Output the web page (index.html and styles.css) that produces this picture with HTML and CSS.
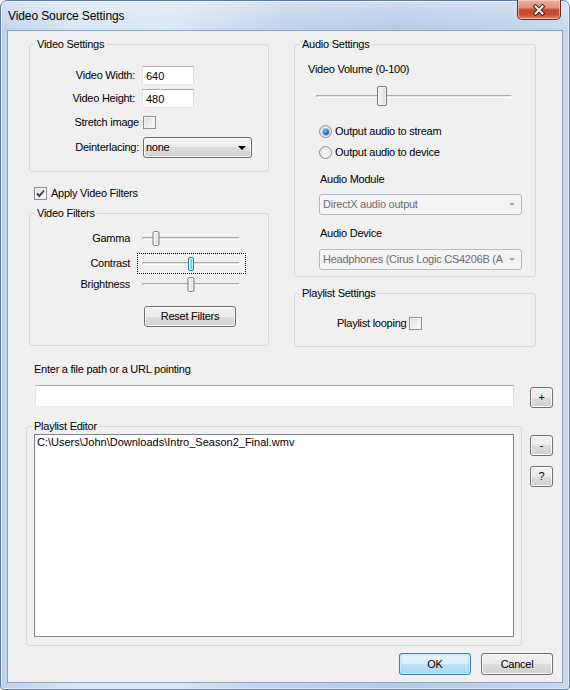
FILE: index.html
```html
<!DOCTYPE html>
<html lang="en">
<head>
<meta charset="utf-8">
<title>Video Source Settings</title>
<link rel="stylesheet" href="styles.css">
</head>
<body>
<div class="window">
  <div class="titlebar">
    <span class="title">Video Source Settings</span>
    <button class="close" type="button" aria-label="Close">
      <svg width="14" height="12" viewBox="0 0 14 12" aria-hidden="true">
        <path d="M3.5 2.5 L10.5 9.5 M10.5 2.5 L3.5 9.5" stroke="#4a1d16" stroke-width="4" stroke-linecap="square" fill="none"/>
        <path d="M3.5 2.5 L10.5 9.5 M10.5 2.5 L3.5 9.5" stroke="#ffffff" stroke-width="2" stroke-linecap="square" fill="none"/>
      </svg>
    </button>
  </div>
  <div class="client">
    <div class="top">
      <div class="col col-left">
        <fieldset class="group">
          <legend>Video Settings</legend>
          <div class="vs-body">
            <div class="frow r-width"><span class="flabel narrow">Video Width:</span><input class="textbox small" value="640"></div>
            <div class="frow r-height"><span class="flabel narrow">Video Height:</span><input class="textbox small" value="480"></div>
            <div class="frow r-stretch"><span class="flabel">Stretch image</span><span class="check"></span></div>
            <div class="frow r-deint"><span class="flabel">Deinterlacing:</span><span class="combo deint"><span class="combo-text">none</span><span class="arrow"></span></span></div>
          </div>
        </fieldset>
        <div class="apply">
          <span class="check checked">
            <svg width="11" height="11" viewBox="0 0 11 11" aria-hidden="true"><path d="M2 5.5 L4.3 8 L9 2.5" stroke="#2c3f73" stroke-width="1.9" fill="none"/></svg>
          </span>
          <span class="apply-text">Apply Video Filters</span>
        </div>
        <fieldset class="group filters">
          <legend>Video Filters</legend>
          <div class="vf-body">
            <div class="srow r-gamma">
              <span class="slabel">Gamma</span>
              <span class="slider small"><span class="track"><span class="thumb" style="left: 13.3%"></span></span></span>
            </div>
            <div class="srow r-contrast">
              <span class="slabel">Contrast</span>
              <span class="slider small focused"><span class="track"><span class="thumb hot" style="left: 50.5%"></span></span></span>
            </div>
            <div class="srow r-bright">
              <span class="slabel">Brightness</span>
              <span class="slider small"><span class="track"><span class="thumb" style="left: 50.5%"></span></span></span>
            </div>
            <button class="btn reset" type="button">Reset Filters</button>
          </div>
        </fieldset>
      </div>
      <div class="col col-right">
        <fieldset class="group">
          <legend>Audio Settings</legend>
          <div class="as-body">
            <div class="txt vol-label">Video Volume (0-100)</div>
            <span class="slider volume"><span class="track"><span class="thumb big" style="left: 33.7%"></span></span></span>
            <div class="rrow r-stream"><span class="radio on"></span><span class="rtext">Output audio to stream</span></div>
            <div class="rrow r-device"><span class="radio"></span><span class="rtext">Output audio to device</span></div>
            <div class="txt sub-label module-label">Audio Module</div>
            <span class="combo disabled wide module"><span class="combo-text">DirectX audio output</span><span class="arrow"></span></span>
            <div class="txt sub-label device-label">Audio Device</div>
            <span class="combo disabled wide device"><span class="combo-text">Headphones (Cirus Logic CS4206B (A</span><span class="arrow"></span></span>
          </div>
        </fieldset>
        <fieldset class="group playlist-settings">
          <legend>Playlist Settings</legend>
          <div class="ps-body">
            <span class="txt">Playlist looping</span><span class="check"></span>
          </div>
        </fieldset>
      </div>
    </div>

    <div class="bottom">
      <div class="txt path-label">Enter a file path or a URL pointing</div>
      <div class="path-cell"><input class="textbox path" value=""></div>
      <button class="btn side plus" type="button">+</button>
      <fieldset class="group editor">
        <legend>Playlist Editor</legend>
        <div class="listbox">
          <div class="item">C:\Users\John\Downloads\Intro_Season2_Final.wmv</div>
        </div>
      </fieldset>
      <div class="side-col">
        <button class="btn side" type="button">-</button>
        <button class="btn side" type="button">?</button>
      </div>
    </div>

    <div class="footer">
      <button class="btn dlg default" type="button">OK</button>
      <button class="btn dlg" type="button">Cancel</button>
    </div>
  </div>
</div>
</body>
</html>
```
FILE: styles.css
```css
* { box-sizing: border-box; }

html, body {
  margin: 0;
  padding: 0;
}

body {
  width: 570px;
  height: 690px;
  overflow: hidden;
  background: #ffffff;
  font-family: "Liberation Sans", Arial, sans-serif;
  font-size: 11px;
  line-height: 13px;
  letter-spacing: -0.25px;
  color: #000;
}

/* ---------- window frame ---------- */
.window {
  width: 570px;
  height: 690px;
  display: flex;
  flex-direction: column;
  border: 1px solid #5f7d9f;
  border-radius: 7px 7px 4px 4px;
  background:
    linear-gradient(to bottom, rgba(255,255,255,0.35) 0, rgba(255,255,255,0) 30px),
    linear-gradient(to right, #bed3eb 0%, #d6e4f3 12%, #d9e6f4 30%, #bcd2ea 50%, #b3cbe7 70%, #bcd2eb 90%, #c8daef 100%);
  box-shadow: inset 0 0 0 1px rgba(255,255,255,0.6);
}

.titlebar {
  height: 29px;
  flex: none;
  display: flex;
  align-items: flex-start;
  justify-content: space-between;
  padding-left: 7px;
}

.title {
  font-size: 12px;
  line-height: 15px;
  letter-spacing: -0.1px;
  margin-top: 8px;
  color: #000;
}

.close {
  width: 44px;
  height: 20px;
  margin-right: 8px;
  margin-top: -1px;
  padding: 0;
  border: 1px solid #6b2a20;
  border-top: none;
  border-radius: 0 0 5px 5px;
  background: linear-gradient(to bottom, #eab0a3 0%, #e0907e 40%, #c9472f 52%, #c64a31 75%, #de8c72 100%);
  box-shadow: inset 0 0 0 1px rgba(255,220,210,0.55);
  display: flex;
  align-items: center;
  justify-content: center;
}

.client {
  flex: 1;
  margin: 0 6px 6px 6px;
  border: 1px solid #8da2ba;
  background: #f0f0f0;
  display: flex;
  flex-direction: column;
}

/* ---------- group boxes ---------- */
.group {
  margin: 0;
  padding: 0;
  min-width: 0;
  border: 1px solid #d5dadf;
  border-radius: 3px;
}

.group legend {
  margin-left: 5px;
  padding: 0 2px;
  line-height: 13px;
  font-size: 11px;
}

.txt { line-height: 13px; white-space: nowrap; }

/* ---------- top area ---------- */
.top {
  display: flex;
  align-items: flex-start;
  gap: 25px;
  padding: 7px 0 0 21px;
}

.col { display: flex; flex-direction: column; }
.col-left { width: 240px; }
.col-right { width: 242px; }

/* video settings */
.vs-body {
  padding: 15px 0 13px 0;
  display: flex;
  flex-direction: column;
}

.frow {
  display: flex;
  align-items: center;
}

.flabel {
  width: 109px;
  text-align: right;
  white-space: nowrap;
}
.flabel.narrow { padding-right: 4px; }

.r-width { height: 19px; }
.r-height { height: 19px; margin-top: 4px; }
.r-stretch { height: 13px; margin-top: 8px; }
.r-deint { height: 21px; margin-top: 8px; }

.r-width .textbox, .r-height .textbox { margin-left: 3px; }
.r-stretch .check, .r-deint .combo { margin-left: 4px; }

.textbox {
  height: 19px;
  border: 1px solid;
  border-color: #abadb3 #dbdfe6 #e3e9ef #e2e3ea;
  background: #fff;
  font: inherit;
  font-size: 11px;
  letter-spacing: 0;
  color: #000;
  padding: 0 3px;
  outline: none;
}
.textbox.small { width: 52px; }

/* checkbox */
.check {
  width: 13px;
  height: 13px;
  flex: none;
  display: inline-flex;
  align-items: center;
  justify-content: center;
  border: 1px solid #8e8f8f;
  background: linear-gradient(135deg, #dcdcdc 0%, #eeeeee 50%, #fbfbfb 100%);
  box-shadow: inset 0 0 0 1px #f4f4f4;
}
.check.checked {
  background: linear-gradient(135deg, #e2e4e8 0%, #f2f3f5 60%, #fcfcfc 100%);
}

/* combo */
.combo {
  display: flex;
  align-items: center;
  height: 21px;
  border: 1px solid #707070;
  border-radius: 3px;
  background: linear-gradient(to bottom, #f3f3f3 0%, #ececec 50%, #dedede 50%, #d0d0d0 100%);
  box-shadow: inset 0 0 0 1px #fbfbfb;
  padding-left: 2px;
  overflow: hidden;
}
.combo.deint { width: 109px; }
.combo-text {
  flex: 1;
  min-width: 0;
  overflow: hidden;
  white-space: nowrap;
}
.arrow {
  flex: none;
  width: 0;
  height: 0;
  border-left: 4px solid transparent;
  border-right: 4px solid transparent;
  border-top: 4px solid #000;
  margin: 0 5px 0 4px;
}
.combo.disabled {
  border-color: #b4b8bc;
  background: #f4f4f4;
  box-shadow: none;
  color: #6d6d6d;
  padding-left: 3px;
}
.combo.disabled .arrow {
  border-left-width: 3.5px;
  border-right-width: 3.5px;
  border-top: 3.5px solid #a3a3a3;
  margin-right: 6px;
  margin-left: 2px;
}
.combo.wide { width: 203px; margin-left: 24px; }

/* apply video filters */
.apply {
  display: flex;
  align-items: center;
  height: 13px;
  margin-top: 15px;
  padding-left: 5px;
}
.apply-text { margin-left: 4px; white-space: nowrap; }

/* video filters */
.filters { margin-top: 7px; }
.vf-body {
  padding: 8px 0 18px 0;
  display: flex;
  flex-direction: column;
  align-items: flex-start;
}
.srow {
  display: flex;
  align-items: center;
  height: 21px;
}
.r-contrast { margin-top: 4px; }
.slabel {
  width: 100px;
  text-align: right;
  white-space: nowrap;
}

/* sliders */
.slider {
  display: block;
  flex: none;
}
.slider.small {
  width: 109px;
  height: 21px;
  margin-left: 7px;
  padding: 9px 6px 0 5px;
}
.slider.focused { outline: 1px dotted #000; outline-offset: -1px; }
.slider .track {
  position: relative;
  display: block;
  height: 3px;
  border-top: 1px solid #a8a8a8;
  border-left: 1px solid #b8b8b8;
  border-bottom: 1px solid #ffffff;
  border-right: 1px solid #ffffff;
  background: #e6e6e6;
}
.slider .thumb {
  position: absolute;
  top: -7px;
  width: 7px;
  height: 15px;
  transform: translateX(-50%);
  border: 1px solid #7a7a7a;
  border-radius: 2px;
  background: linear-gradient(to right, #f6f6f6 0%, #e9e9e9 50%, #d8d8d8 100%);
  box-shadow: inset 0 0 0 1px rgba(255,255,255,0.7);
}
.slider .thumb.hot {
  width: 6px;
  height: 14px;
  top: -6px;
  border-color: #2f7fae;
  background: linear-gradient(to right, #b9ecfd 0%, #6fd2f6 50%, #3fbbe9 100%);
}
.slider.volume {
  width: 208px;
  height: 24px;
  margin-left: 15px;
  margin-top: 8px;
  padding: 11px 6px 0 6px;
}
.slider.volume .thumb.big {
  top: -10px;
  width: 10px;
  height: 20px;
}

/* buttons */
.btn {
  font-family: inherit;
  font-size: 11px;
  letter-spacing: -0.25px;
  color: #000;
  padding: 0;
  border: 1px solid #707070;
  border-radius: 3px;
  background: linear-gradient(to bottom, #f2f2f2 0%, #ebebeb 50%, #dddddd 50%, #cfcfcf 100%);
  box-shadow: inset 0 0 0 1px #fbfbfb;
  line-height: 13px;
}
.btn.reset {
  width: 92px;
  height: 21px;
  margin: 11px 0 0 114px;
}
.btn.default {
  border-color: #3c7fb1;
  background: linear-gradient(to bottom, #e9f5fc 0%, #d8eefb 50%, #bfe4f8 50%, #a9d8f3 100%);
  box-shadow: inset 0 0 0 1px #c9ecfb, inset 0 0 2px 1px #8bd2f4;
}

/* audio settings */
.as-body {
  padding: 12px 0 6px 0;
  display: flex;
  flex-direction: column;
  align-items: flex-start;
}
.vol-label { margin-left: 13px; }
.rrow {
  display: flex;
  align-items: center;
  height: 13px;
  margin-left: 24px;
}
.r-stream { margin-top: 17px; }
.r-device { margin-top: 8px; }
.rtext { margin-left: 3px; white-space: nowrap; }

.radio {
  width: 13px;
  height: 13px;
  flex: none;
  border-radius: 50%;
  border: 1px solid #8e8f8f;
  background: radial-gradient(circle at 60% 60%, #fdfdfd 0%, #ececec 55%, #d4d4d4 100%);
  display: inline-flex;
  align-items: center;
  justify-content: center;
}
.radio.on::after {
  content: "";
  width: 6px;
  height: 6px;
  border-radius: 50%;
  background: radial-gradient(circle at 40% 35%, #7fcdee 0%, #2481b8 45%, #0d3f6b 100%);
  box-shadow: 0 0 0 1px rgba(110,160,200,0.55);
}

.sub-label { margin-left: 25px; }
.module-label { margin-top: 14px; }
.combo.module { margin-top: 8px; }
.device-label { margin-top: 12px; }
.combo.device { margin-top: 9px; }

/* playlist settings */
.playlist-settings { margin-top: 10px; }
.ps-body {
  display: flex;
  align-items: center;
  padding: 17px 0 16px 42px;
  height: 46px;
}
.ps-body .check { margin-left: 3px; }

/* ---------- bottom area ---------- */
.bottom {
  display: grid;
  grid-template-columns: 496px 23px;
  column-gap: 8px;
  padding-left: 18px;
  margin-top: 16px;
  align-items: start;
}
.path-label {
  grid-column: 1 / -1;
  padding-left: 8px;
}
.path-cell { padding-top: 9px; }
.textbox.path {
  display: block;
  width: 479px;
  height: 22px;
  margin-left: 9px;
}
.btn.side {
  width: 23px;
  height: 21px;
  font-size: 11px;
}
.btn.plus { margin-top: 11px; }

.editor { margin-top: 12px; }
.listbox {
  margin: 1px 7px 8px 7px;
  height: 203px;
  border: 1px solid #828790;
  background: #fff;
  padding: 1px 2px;
}
.item { white-space: nowrap; line-height: 13px; letter-spacing: 0; }

.side-col {
  display: flex;
  flex-direction: column;
  gap: 10px;
  margin-top: 27px;
}

/* footer */
.footer {
  display: flex;
  justify-content: flex-end;
  gap: 10px;
  padding-right: 9px;
  margin-top: 7px;
}
.btn.dlg {
  width: 72px;
  height: 22px;
}
```
